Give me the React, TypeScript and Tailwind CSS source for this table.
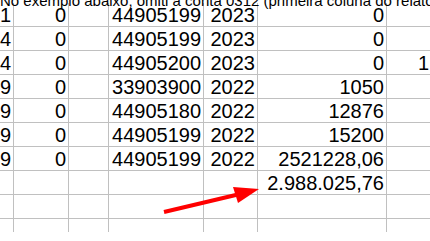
const rows = [
  { a: "1", b: "0", d: "44905199", e: "2023", f: "0", g: "" },
  { a: "4", b: "0", d: "44905199", e: "2023", f: "0", g: "" },
  { a: "4", b: "0", d: "44905200", e: "2023", f: "0", g: "1" },
  { a: "9", b: "0", d: "33903900", e: "2022", f: "1050", g: "" },
  { a: "9", b: "0", d: "44905180", e: "2022", f: "12876", g: "" },
  { a: "9", b: "0", d: "44905199", e: "2022", f: "15200", g: "" },
  { a: "9", b: "0", d: "44905199", e: "2022", f: "2521228,06", g: "" },
  { a: "", b: "", d: "", e: "", f: "2.988.025,76", g: "" },
  { a: "", b: "", d: "", e: "", f: "", g: "" },
];

const cell = "flex h-full items-end justify-end overflow-hidden border-r border-[#c0c0c0] pr-[2px] pb-[1px] leading-[20px]";

const Row = ({ r, last }: { r: (typeof rows)[number]; last?: boolean }) => (
  <div className={`flex ${last ? "h-[13px]" : "h-[24px] border-b border-[#c0c0c0]"}`}>
    <div className={`${cell} w-[14px] shrink-0`}>{r.a}</div>
    <div className={`${cell} w-[55px] shrink-0`}>{r.b}</div>
    <div className={`${cell} w-[40px] shrink-0`}></div>
    <div className={`${cell} w-[95px] shrink-0`}>{r.d}</div>
    <div className={`${cell} w-[54px] shrink-0`}>{r.e}</div>
    <div className={`${cell} w-[129px] shrink-0`}>{r.f}</div>
    <div className="flex h-full flex-1 items-end pb-[1px] pl-[31px] leading-[20px]">{r.g}</div>
  </div>
);

export default function App() {
  return (
    <div className="relative h-[241px] w-[430px] overflow-hidden bg-white font-['Liberation_Sans',Arial,sans-serif] text-[20px] text-black">
      <div className="flex h-[3px] items-start">
        <p className="relative -top-[7px] whitespace-nowrap text-[15px] leading-[15px]">
          No exemplo abaixo, omiti a conta 0312 (primeira coluna do relatório)
        </p>
      </div>
      {rows.map((r, i) => (
        <Row key={i} r={r} />
      ))}
      <Row r={rows[8]} last />

      {/* seta vermelha */}
      <svg className="absolute left-0 top-0" width="430" height="241" viewBox="0 0 430 241">
        <line x1="164" y1="212" x2="240" y2="194" stroke="#ff0000" strokeWidth="4" />
        <polygon points="233,187 259,189 238,203" fill="#ff0000" />
      </svg>
    </div>
  );
}
